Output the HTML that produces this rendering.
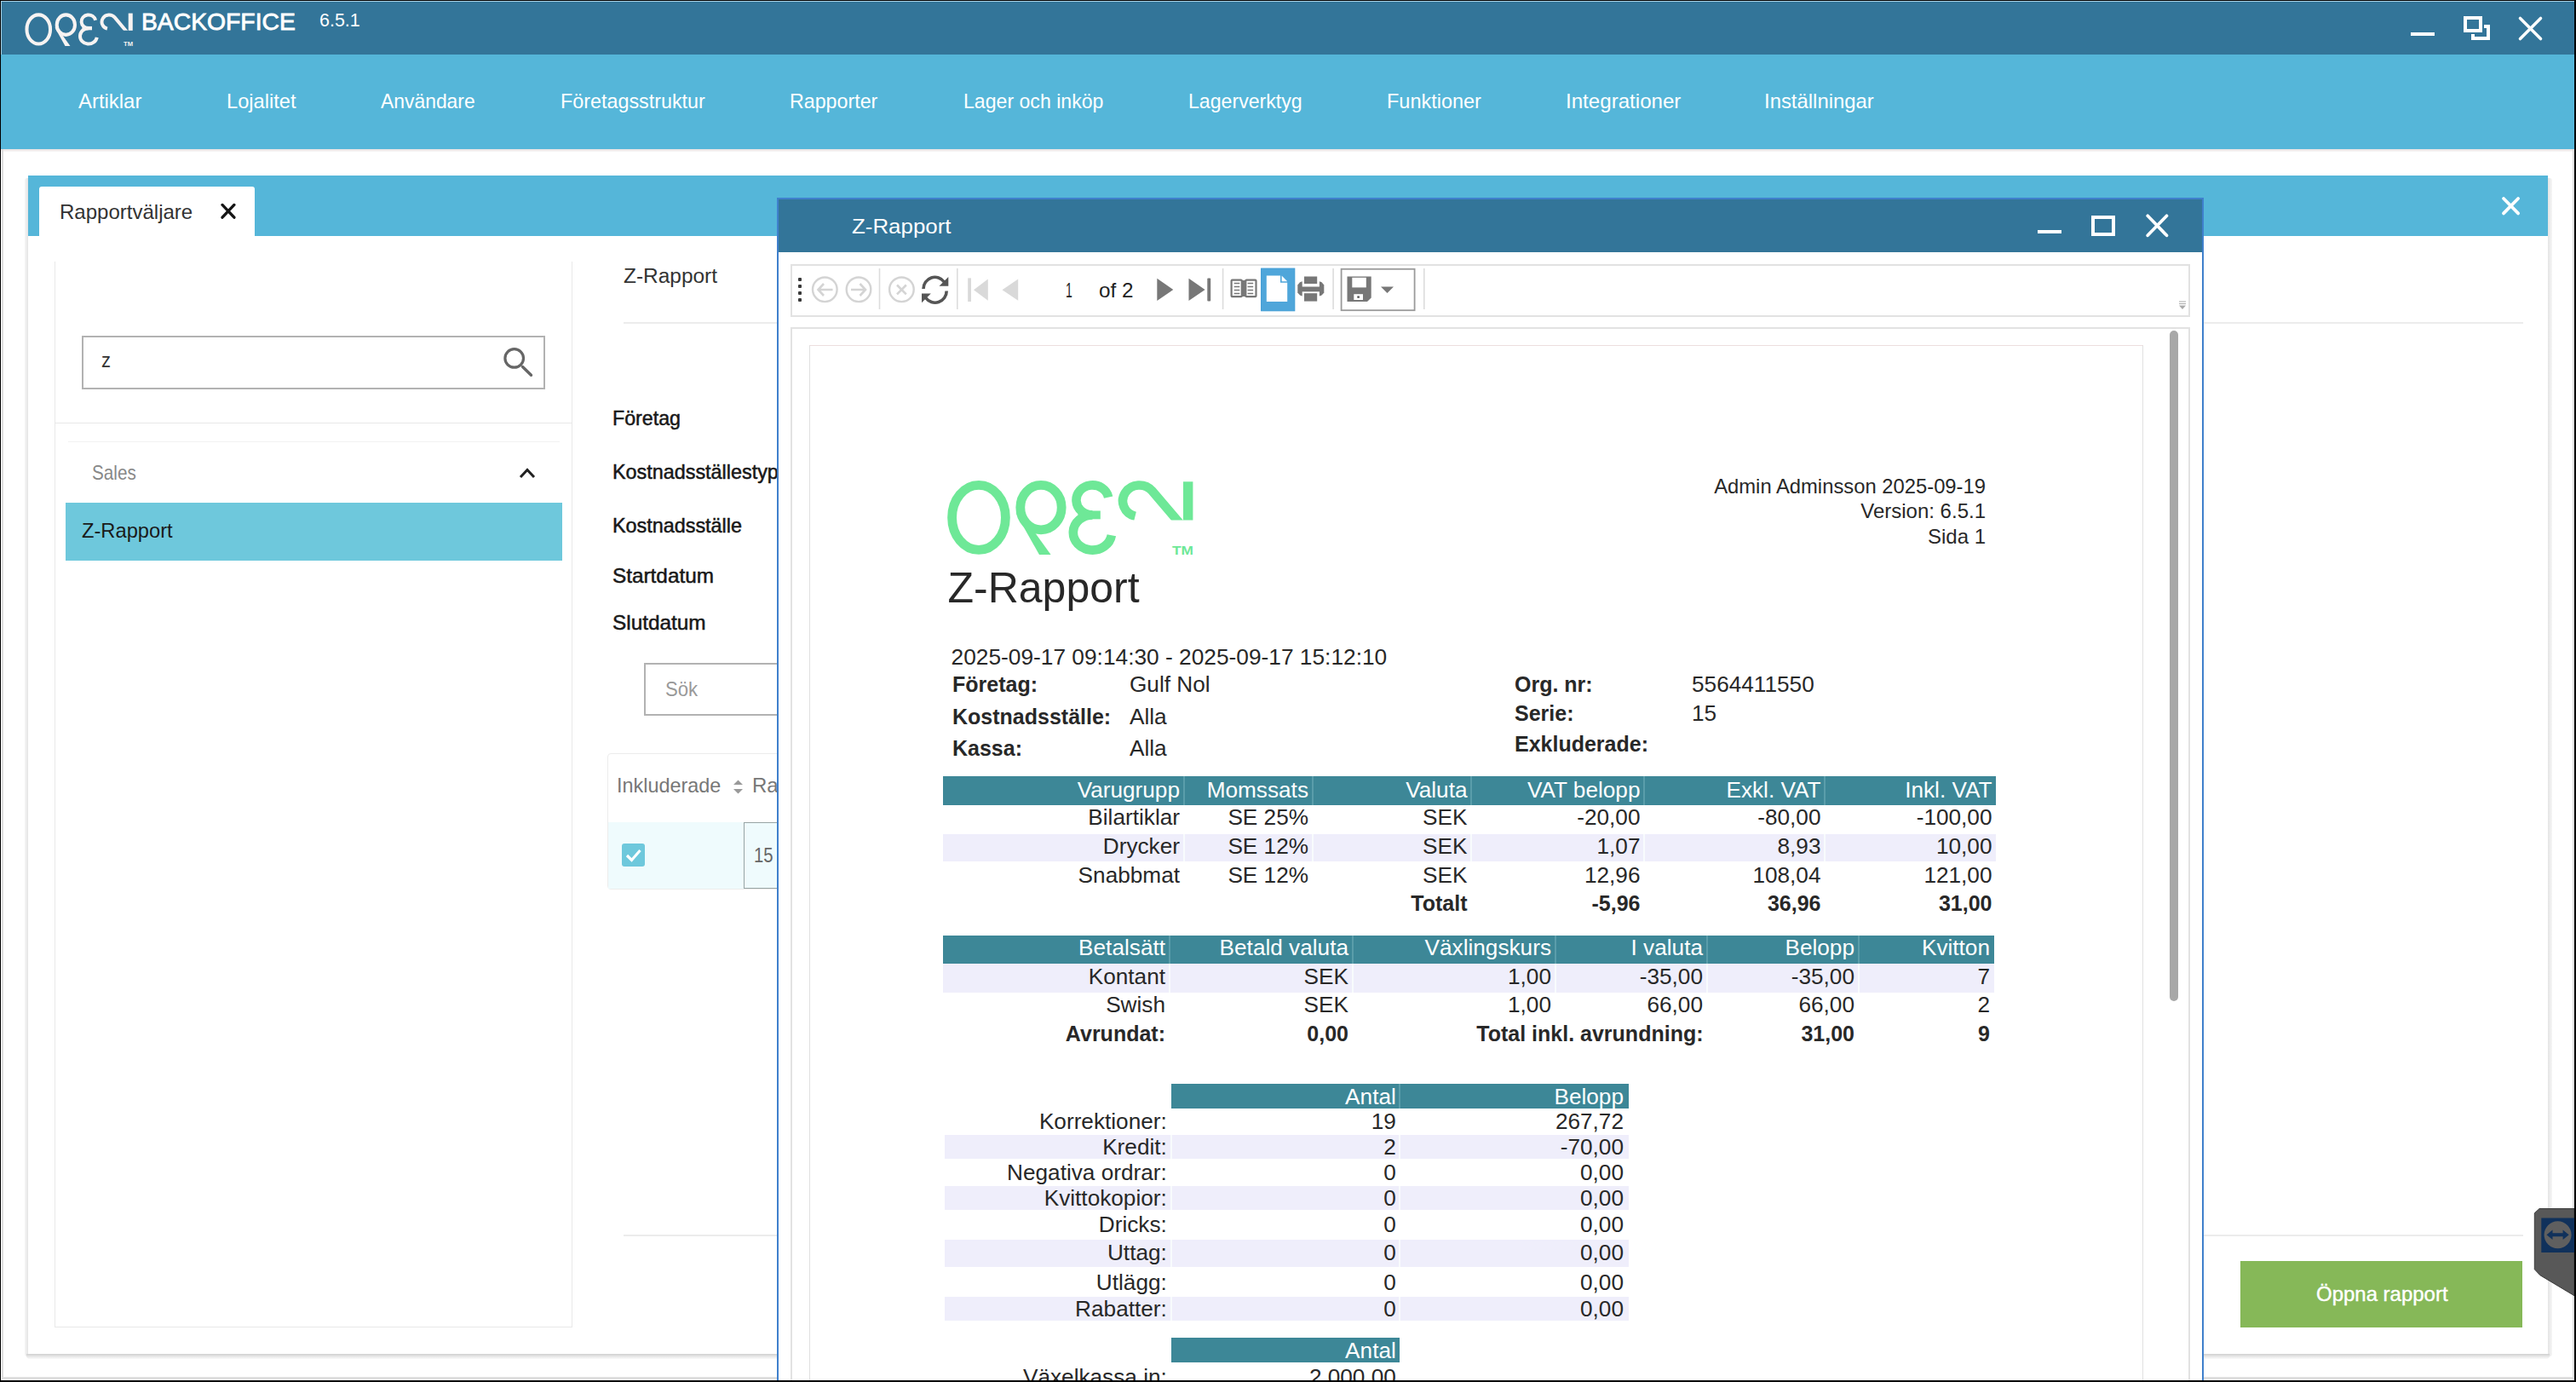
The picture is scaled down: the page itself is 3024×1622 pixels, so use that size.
<!DOCTYPE html>
<html><head><meta charset="utf-8"><title>Z-Rapport</title>
<style>
html,body{margin:0;padding:0;}
body{width:3024px;height:1622px;position:relative;overflow:hidden;background:#fff;font-family:"Liberation Sans",sans-serif;}
.t{position:absolute;white-space:nowrap;}
</style></head><body>
<div style="position:absolute;left:0px;top:0px;width:3024px;height:1622px;background:#000"></div>
<div style="position:absolute;left:1px;top:1px;width:3021px;height:1619px;background:#fff"></div>
<div style="position:absolute;left:1px;top:1px;width:3021px;height:63px;background:#337599"></div>
<div style="position:absolute;left:1px;top:1px;width:3021px;height:1px;background:#a9d3e6"></div>
<div style="position:absolute;left:1px;top:1px;width:1px;height:63px;background:#a9d3e6"></div>
<svg style="position:absolute;left:29px;top:14.5px;overflow:visible" width="127.0" height="39.0" viewBox="0 0 289 87" preserveAspectRatio="none">
<defs><clipPath id="cpNI1"><rect x="150" y="-5" width="139" height="51.5"/></clipPath></defs>
<ellipse cx="37" cy="43.4" rx="31.4" ry="38" fill="none" stroke="#f7f3f2" stroke-width="9.18"/>
<ellipse cx="110" cy="31.6" rx="24.2" ry="26.2" fill="none" stroke="#f7f3f2" stroke-width="9.18"/>
<path d="M80.3 38 L108 87 H121.6 L103.4 61.7 Z" fill="#f7f3f2"/>
<path d="M189.15 19.56 A19 17.5 0 1 0 170.5 40.4 M170.5 40.4 A22.65 20.6 0 1 0 192.86 64.29" fill="none" stroke="#f7f3f2" stroke-width="9.01"/>
<rect x="153.5" y="35.5" width="26.3" height="9.8" fill="#f7f3f2"/>
<path d="M220.55 41.87 A19.5 18.5 0 1 1 240.4 12 L277.9 56" fill="none" stroke="#f7f3f2" stroke-width="9.01" clip-path="url(#cpNI1)"/>
<rect x="277" y="1.3" width="11.4" height="45.2" fill="#f7f3f2"/>
<text x="264" y="86.5" font-size="14" font-weight="bold" font-family="Liberation Sans" fill="#f7f3f2" textLength="25" lengthAdjust="spacingAndGlyphs">TM</text>
</svg>
<div class="t" style="left:166.00px;top:11.72px;font-size:27.5px;line-height:27.5px;color:#fff;font-weight:normal;transform:scaleX(1.0289);transform-origin:0 0;-webkit-text-stroke:0.8px #fff;">BACKOFFICE</div>
<div class="t" style="left:375.30px;top:12.87px;font-size:22px;line-height:22px;color:#fff;font-weight:normal;transform:scaleX(0.9745);transform-origin:0 0;">6.5.1</div>
<div style="position:absolute;left:2830px;top:38px;width:28px;height:4px;background:#fff"></div>
<svg style="position:absolute;left:2880px;top:10px" width="60" height="50"><path d="M23 30 V35 H41 V21 H36" fill="none" stroke="#fff" stroke-width="4"/><rect x="14" y="11" width="18" height="15" fill="none" stroke="#fff" stroke-width="4"/></svg>
<svg style="position:absolute;left:2950px;top:13px" width="40" height="40"><path d="M8.5 8.5 L32.5 32.5 M32.5 8.5 L8.5 32.5" stroke="#fff" stroke-width="3.6" stroke-linecap="round"/></svg>
<div style="position:absolute;left:1px;top:64px;width:3021px;height:110.5px;background:#55b6d9"></div>
<div style="position:absolute;left:1px;top:175px;width:3021px;height:2.5px;background:linear-gradient(to bottom,#e6e0e0,#f8f6f6)"></div>
<div class="t" style="left:92.00px;top:106.98px;font-size:24px;line-height:24px;color:#fff;font-weight:normal;transform:scaleX(0.9960);transform-origin:0 0;">Artiklar</div>
<div class="t" style="left:266.30px;top:106.98px;font-size:24px;line-height:24px;color:#fff;font-weight:normal;transform:scaleX(0.9862);transform-origin:0 0;">Lojalitet</div>
<div class="t" style="left:446.80px;top:106.98px;font-size:24px;line-height:24px;color:#fff;font-weight:normal;transform:scaleX(0.9535);transform-origin:0 0;">Användare</div>
<div class="t" style="left:657.70px;top:106.98px;font-size:24px;line-height:24px;color:#fff;font-weight:normal;transform:scaleX(0.9718);transform-origin:0 0;">Företagsstruktur</div>
<div class="t" style="left:926.70px;top:106.98px;font-size:24px;line-height:24px;color:#fff;font-weight:normal;transform:scaleX(0.9678);transform-origin:0 0;">Rapporter</div>
<div class="t" style="left:1130.50px;top:106.98px;font-size:24px;line-height:24px;color:#fff;font-weight:normal;transform:scaleX(0.9624);transform-origin:0 0;">Lager och inköp</div>
<div class="t" style="left:1394.70px;top:106.98px;font-size:24px;line-height:24px;color:#fff;font-weight:normal;transform:scaleX(0.9638);transform-origin:0 0;">Lagerverktyg</div>
<div class="t" style="left:1627.80px;top:106.98px;font-size:24px;line-height:24px;color:#fff;font-weight:normal;transform:scaleX(0.9780);transform-origin:0 0;">Funktioner</div>
<div class="t" style="left:1838.00px;top:106.98px;font-size:24px;line-height:24px;color:#fff;font-weight:normal;transform:scaleX(1.0047);transform-origin:0 0;">Integrationer</div>
<div class="t" style="left:2071.20px;top:106.98px;font-size:24px;line-height:24px;color:#fff;font-weight:normal;transform:scaleX(0.9952);transform-origin:0 0;">Inställningar</div>
<div style="position:absolute;left:29px;top:209px;width:4px;height:1383px;background:linear-gradient(to right,#f6f6f6,#e4e4e4);border-radius:3px 0 0 3px"></div>
<div style="position:absolute;left:2991px;top:209px;width:4.5px;height:1383px;background:linear-gradient(to right,#e4e4e4,#f6f6f6);border-radius:0 3px 3px 0"></div>
<div style="position:absolute;left:31px;top:1589px;width:2962px;height:6px;background:linear-gradient(to bottom,#cfcfcf,#ececec 60%,#fafafa);border-radius:0 0 4px 4px"></div>
<div style="position:absolute;left:33px;top:206px;width:2958px;height:1383px;background:#fff"></div>
<div style="position:absolute;left:33px;top:206px;width:2958px;height:71px;background:#55b6d9"></div>
<div style="position:absolute;left:46px;top:219px;width:253px;height:58px;background:#fff;border-radius:3px 3px 0 0"></div>
<div class="t" style="left:69.50px;top:236.68px;font-size:24px;line-height:24px;color:#333;font-weight:normal;transform:scaleX(1.0009);transform-origin:0 0;">Rapportväljare</div>
<svg style="position:absolute;left:255px;top:235px" width="26" height="26"><path d="M6 5.4 L19.9 20.2 M19.9 5.4 L6 20.2" stroke="#151515" stroke-width="3.3" stroke-linecap="round"/></svg>
<svg style="position:absolute;left:2933px;top:227px" width="30" height="30"><path d="M6 6 L23.1 23.4 M23.1 6 L6 23.4" stroke="#fff" stroke-width="3.8" stroke-linecap="round"/></svg>
<div style="position:absolute;left:64px;top:307px;width:608px;height:1251px;border:1px solid #e8e8e8;box-sizing:border-box;border-top:none"></div>
<div style="position:absolute;left:96px;top:393.5px;width:543.5px;height:63.0px;border:2px solid #b2b2b2;box-sizing:border-box"></div>
<div class="t" style="left:119.00px;top:411.18px;font-size:24px;line-height:24px;color:#333;font-weight:normal;transform:scaleX(0.9167);transform-origin:0 0;">z</div>
<svg style="position:absolute;left:585px;top:403px" width="46" height="46"><circle cx="18.7" cy="17.4" r="10.8" fill="none" stroke="#666" stroke-width="3.2"/><path d="M28.5 27.5 L38.5 37.3" stroke="#666" stroke-width="3.4" stroke-linecap="round"/></svg>
<div style="position:absolute;left:64px;top:496px;width:608px;height:1px;background:#e8e8e8"></div>
<div style="position:absolute;left:80px;top:518px;width:577px;height:1px;background:#f2f2f2"></div>
<div class="t" style="left:108.00px;top:542.68px;font-size:24px;line-height:24px;color:#888;font-weight:normal;transform:scaleX(0.8625);transform-origin:0 0;">Sales</div>
<svg style="position:absolute;left:605px;top:545px" width="30" height="20"><path d="M6 15 L14 6.5 L22 15" fill="none" stroke="#222" stroke-width="3"/></svg>
<div style="position:absolute;left:77px;top:590px;width:583px;height:68px;background:#6ec8dc"></div>
<div class="t" style="left:96.00px;top:611.38px;font-size:24px;line-height:24px;color:#1a1a1a;font-weight:normal;transform:scaleX(0.9874);transform-origin:0 0;">Z-Rapport</div>
<div class="t" style="left:732.00px;top:312.53px;font-size:23px;line-height:23px;color:#333;font-weight:normal;transform:scaleX(1.0622);transform-origin:0 0;">Z-Rapport</div>
<div style="position:absolute;left:732px;top:378px;width:2230px;height:2px;background:#ececec"></div>
<div class="t" style="left:719.00px;top:478.68px;font-size:24px;line-height:24px;color:#1a1a1a;font-weight:normal;transform:scaleX(0.9669);transform-origin:0 0;-webkit-text-stroke:0.5px #111;">Företag</div>
<div class="t" style="left:719.00px;top:541.68px;font-size:24px;line-height:24px;color:#1a1a1a;font-weight:normal;transform:scaleX(0.9736);transform-origin:0 0;-webkit-text-stroke:0.5px #111;">Kostnadsställestyp</div>
<div class="t" style="left:719.00px;top:604.68px;font-size:24px;line-height:24px;color:#1a1a1a;font-weight:normal;transform:scaleX(0.9736);transform-origin:0 0;-webkit-text-stroke:0.5px #111;">Kostnadsställe</div>
<div class="t" style="left:719.00px;top:664.48px;font-size:24px;line-height:24px;color:#1a1a1a;font-weight:normal;transform:scaleX(1.0135);transform-origin:0 0;-webkit-text-stroke:0.5px #111;">Startdatum</div>
<div class="t" style="left:719.00px;top:719.38px;font-size:24px;line-height:24px;color:#1a1a1a;font-weight:normal;transform:scaleX(1.0143);transform-origin:0 0;-webkit-text-stroke:0.5px #111;">Slutdatum</div>
<div style="position:absolute;left:756px;top:777.5px;width:344px;height:62.5px;border:2px solid #b2b2b2;box-sizing:border-box"></div>
<div class="t" style="left:780.60px;top:796.68px;font-size:24px;line-height:24px;color:#999;font-weight:normal;transform:scaleX(0.9227);transform-origin:0 0;">Sök</div>
<div style="position:absolute;left:713px;top:884px;width:387px;height:160px;border:1px solid #ececec;border-radius:4px;box-sizing:border-box"></div>
<div class="t" style="left:724.40px;top:910.28px;font-size:24px;line-height:24px;color:#777;font-weight:normal;transform:scaleX(0.9740);transform-origin:0 0;">Inkluderade</div>
<svg style="position:absolute;left:858px;top:912px" width="18" height="24"><path d="M3 9 L8.5 3.5 L14 9 Z M3 14 L8.5 19.5 L14 14 Z" fill="#999"/></svg>
<div class="t" style="left:883px;top:910.28px;font-size:24px;line-height:24px;color:#777;font-weight:normal;">Rapport</div>
<div style="position:absolute;left:714px;top:965px;width:386px;height:78px;background:#effbfd"></div>
<div style="position:absolute;left:730px;top:990px;width:27px;height:27px;background:#6ec8dc;border-radius:3px"></div>
<svg style="position:absolute;left:730px;top:990px" width="27" height="27"><path d="M6 14 L11.5 19.5 L21.5 8" fill="none" stroke="#fff" stroke-width="3.2"/></svg>
<div style="position:absolute;left:873px;top:965px;width:227px;height:78px;border:1.5px solid #98a4a4;box-sizing:border-box"></div>
<div class="t" style="left:884.80px;top:992.18px;font-size:24px;line-height:24px;color:#666;font-weight:normal;transform:scaleX(0.8464);transform-origin:0 0;">15</div>
<div style="position:absolute;left:732px;top:1449px;width:2230px;height:2px;background:#ececec"></div>
<div style="position:absolute;left:2630px;top:1480px;width:331px;height:78px;background:#86b858"></div>
<div class="t" style="left:2718.70px;top:1507.18px;font-size:24px;line-height:24px;color:#fff;font-weight:normal;transform:scaleX(0.9987);transform-origin:0 0;-webkit-text-stroke:0.4px #fff;">Öppna rapport</div>
<div style="position:absolute;left:912px;top:231.5px;width:1675px;height:1388.5px;background:#3f80cc"></div>
<div style="position:absolute;left:914px;top:233.5px;width:1671px;height:1386.5px;background:#fff"></div>
<div style="position:absolute;left:914px;top:233.5px;width:1671px;height:62.5px;background:#337599"></div>
<div class="t" style="left:1000.00px;top:253.98px;font-size:24px;line-height:24px;color:#fff;font-weight:normal;transform:scaleX(1.0781);transform-origin:0 0;">Z-Rapport</div>
<div style="position:absolute;left:2392px;top:270px;width:28px;height:4px;background:#fff"></div>
<div style="position:absolute;left:2455px;top:253px;width:28px;height:24px;border:4px solid #fff;box-sizing:border-box"></div>
<svg style="position:absolute;left:2514px;top:247px" width="36" height="36"><path d="M7.2 6.3 L29.5 29.3 M29.5 6.3 L7.2 29.3" stroke="#fff" stroke-width="3.7" stroke-linecap="round"/></svg>
<div style="position:absolute;left:928px;top:310px;width:1643px;height:62px;border:2px solid #e2e2e2;box-sizing:border-box"></div>
<div style="position:absolute;left:928px;top:384px;width:1643px;height:1256px;border:2px solid #e2e2e2;box-sizing:border-box"></div>
<div style="position:absolute;left:950px;top:405px;width:1566px;height:1235px;border:1px solid #e0e0e0;border-top-color:#ecdede;box-sizing:border-box"></div>
<div style="position:absolute;left:2547px;top:388px;width:10px;height:787px;background:#a8a8a8;border-radius:5px"></div>
<svg style="position:absolute;left:928px;top:310px" width="760" height="62" viewBox="928 310 760 62"><g fill="#3a3a3a"><rect x="937" y="326" width="4" height="4" rx="1"/><rect x="937" y="334" width="4" height="4" rx="1"/><rect x="937" y="342" width="4" height="4" rx="1"/><rect x="937" y="350" width="4" height="4" rx="1"/></g><g fill="none" stroke="#d4d4d4" stroke-width="2.4"><circle cx="968.3" cy="339.8" r="14.3"/><circle cx="1008" cy="339.8" r="14.3"/><circle cx="1058.4" cy="339.8" r="14.3"/><path d="M961 340 H977.5 M967 333 L960.5 340 L967 347" stroke-width="2.6"/><path d="M999 340 H1015.5 M1009.5 333 L1016 340 L1009.5 347" stroke-width="2.6"/><path d="M1053 334.5 L1063.8 345.3 M1063.8 334.5 L1053 345.3" stroke-width="2.6"/></g><g fill="#dcdcdc"><rect x="1031.7" y="315" width="1.6" height="48"/><rect x="1123" y="315" width="1.6" height="48"/><rect x="1434.8" y="315" width="1.6" height="48"/><rect x="1564.3" y="315" width="1.6" height="48"/><rect x="1671" y="315" width="1.6" height="48"/></g><g fill="#555"><path d="M1084 339 A13.5 13.5 0 0 1 1108.5 331" fill="none" stroke="#555" stroke-width="3.6"/><path d="M1113.3 325 V335.8 H1102.5 Z"/><path d="M1111.2 341.5 A13.5 13.5 0 0 1 1086.7 349.5" fill="none" stroke="#555" stroke-width="3.6"/><path d="M1082 355.3 V344.5 H1092.8 Z"/></g><g fill="#d9d9d9"><rect x="1136.2" y="326.4" width="3.8" height="27.6"/><path d="M1143 340.2 L1159.8 327.5 V352.8 Z"/><path d="M1176.5 340.2 L1195.2 327.5 V352.8 Z"/></g><g fill="#777"><path d="M1358.3 326.8 L1377.3 340 L1358.3 353.1 Z"/><path d="M1395.5 326.8 L1414.6 340 L1395.5 353.1 Z"/><rect x="1417.3" y="326.4" width="3.9" height="27.1" rx="1"/></g><g fill="none" stroke="#777" stroke-width="2.2"><rect x="1445.6" y="328.6" width="12.2" height="19.6" rx="1"/><rect x="1462.3" y="328.6" width="12.2" height="19.6" rx="1"/></g><rect x="1457.8" y="329" width="4.5" height="19" fill="#777"/><g stroke="#777" stroke-width="1.6"><path d="M1448.7 332.5 H1455.3 M1448.7 336.5 H1455.3 M1448.7 340.5 H1455.3 M1448.7 344.5 H1455.3"/><path d="M1464.6 332.5 H1471.2 M1464.6 336.5 H1471.2 M1464.6 340.5 H1471.2 M1464.6 344.5 H1471.2"/></g><rect x="1480.6" y="315.1" width="39.2" height="49.7" fill="#4fa6da" stroke="#3d9ad4" stroke-width="1"/><path d="M1486.8 323.6 H1503 V331.8 H1511.2 V353.9 H1486.8 Z" fill="#fff"/><path d="M1504.6 323.6 L1511.2 330.2 H1504.6 Z" fill="#fff"/><g fill="#777"><rect x="1531" y="324.5" width="15.2" height="8.5"/><rect x="1531" y="344.2" width="15.2" height="9.4"/><rect x="1528" y="336.5" width="21.6" height="5.8"/><path d="M1528.7 330.3 L1526 331.2 L1523.3 334.5 V343.5 L1526 346.5 L1528.7 347.4 Z"/><path d="M1548.9 330.3 L1551.6 331.2 L1554.3 334.5 V343.5 L1551.6 346.5 L1548.9 347.4 Z"/></g><rect x="1574.6" y="315.8" width="86" height="48.4" fill="none" stroke="#9a9a9a" stroke-width="1.8"/><path d="M1581.5 324.4 H1609.7 V349.5 L1605 354 H1581.5 Z" fill="#777"/><rect x="1587.3" y="325.8" width="16.5" height="11.6" fill="#fff"/><rect x="1589.3" y="345.2" width="10.7" height="6.8" fill="#fff"/><rect x="1593.3" y="347.4" width="2.6" height="2.4" fill="#555"/><path d="M1621 336.5 H1636 L1628.5 344 Z" fill="#777"/></svg>
<div class="t" style="left:1251.40px;top:329.28px;font-size:24px;line-height:24px;color:#222;font-weight:normal;transform:scaleX(0.5856);transform-origin:0 0;">1</div>
<div class="t" style="left:1289.90px;top:329.28px;font-size:24px;line-height:24px;color:#222;font-weight:normal;transform:scaleX(1.0120);transform-origin:0 0;">of 2</div>
<svg style="position:absolute;left:2555px;top:350px" width="14" height="16"><path d="M3 4 H11 M3 6.5 H11" stroke="#aaa" stroke-width="1.2"/><path d="M3 8.5 H11 L7 13 Z" fill="#aaa"/></svg>
<svg style="position:absolute;left:1112px;top:564px;overflow:visible" width="289" height="87" viewBox="0 0 289 87" preserveAspectRatio="none">
<defs><clipPath id="cpNI2"><rect x="150" y="-5" width="139" height="51.5"/></clipPath></defs>
<ellipse cx="37" cy="43.4" rx="31.4" ry="38" fill="none" stroke="#6ee897" stroke-width="10.8"/>
<ellipse cx="110" cy="31.6" rx="24.2" ry="26.2" fill="none" stroke="#6ee897" stroke-width="10.8"/>
<path d="M80.3 38 L108 87 H121.6 L103.4 61.7 Z" fill="#6ee897"/>
<path d="M189.15 19.56 A19 17.5 0 1 0 170.5 40.4 M170.5 40.4 A22.65 20.6 0 1 0 192.86 64.29" fill="none" stroke="#6ee897" stroke-width="10.6"/>
<rect x="153.5" y="35.5" width="26.3" height="9.8" fill="#6ee897"/>
<path d="M220.55 41.87 A19.5 18.5 0 1 1 240.4 12 L277.9 56" fill="none" stroke="#6ee897" stroke-width="10.6" clip-path="url(#cpNI2)"/>
<rect x="277" y="1.3" width="11.4" height="45.2" fill="#6ee897"/>
<text x="264" y="86.5" font-size="14" font-weight="bold" font-family="Liberation Sans" fill="#6ee897" textLength="25" lengthAdjust="spacingAndGlyphs">TM</text>
</svg>
<div class="t" style="left:1112.5px;top:664.66px;font-size:50px;line-height:50px;color:#282828;font-weight:normal;">Z-Rapport</div>
<div class="t" style="left:1116.5px;top:758.13px;font-size:26.3px;line-height:26.3px;color:#282828;font-weight:normal;">2025-09-17 09:14:30 - 2025-09-17 15:12:10</div>
<div class="t" style="right:693.0px;top:559.35px;font-size:23.8px;line-height:23.8px;color:#282828;font-weight:normal;">Admin Adminsson 2025-09-19</div>
<div class="t" style="right:693.0px;top:588.28px;font-size:24px;line-height:24px;color:#282828;font-weight:normal;">Version: 6.5.1</div>
<div class="t" style="right:693.0px;top:618.48px;font-size:24px;line-height:24px;color:#282828;font-weight:normal;">Sida 1</div>
<div class="t" style="left:1118px;top:790.83px;font-size:25px;line-height:25px;color:#282828;font-weight:bold;">Företag:</div>
<div class="t" style="left:1326px;top:789.82px;font-size:26.2px;line-height:26.2px;color:#282828;font-weight:normal;">Gulf Nol</div>
<div class="t" style="left:1118px;top:828.83px;font-size:25px;line-height:25px;color:#282828;font-weight:bold;">Kostnadsställe:</div>
<div class="t" style="left:1326px;top:827.82px;font-size:26.2px;line-height:26.2px;color:#282828;font-weight:normal;">Alla</div>
<div class="t" style="left:1118px;top:865.83px;font-size:25px;line-height:25px;color:#282828;font-weight:bold;">Kassa:</div>
<div class="t" style="left:1326px;top:864.82px;font-size:26.2px;line-height:26.2px;color:#282828;font-weight:normal;">Alla</div>
<div class="t" style="left:1778px;top:790.83px;font-size:25px;line-height:25px;color:#282828;font-weight:bold;">Org. nr:</div>
<div class="t" style="left:1986px;top:789.82px;font-size:26.2px;line-height:26.2px;color:#282828;font-weight:normal;">5564411550</div>
<div class="t" style="left:1778px;top:825.23px;font-size:25px;line-height:25px;color:#282828;font-weight:bold;">Serie:</div>
<div class="t" style="left:1986px;top:824.22px;font-size:26.2px;line-height:26.2px;color:#282828;font-weight:normal;">15</div>
<div class="t" style="left:1778px;top:861.33px;font-size:25px;line-height:25px;color:#282828;font-weight:bold;">Exkluderade:</div>
<div style="position:absolute;left:1107px;top:911px;width:1236px;height:34px;background:#3d8797"></div>
<div style="position:absolute;left:1388.5px;top:911px;width:2.0px;height:34px;background:#5a9daa"></div>
<div style="position:absolute;left:1539.5px;top:911px;width:2.0px;height:34px;background:#5a9daa"></div>
<div style="position:absolute;left:1726px;top:911px;width:2px;height:34px;background:#5a9daa"></div>
<div style="position:absolute;left:1929px;top:911px;width:2px;height:34px;background:#5a9daa"></div>
<div style="position:absolute;left:2141px;top:911px;width:2px;height:34px;background:#5a9daa"></div>
<div class="t" style="right:1639.0px;top:914.42px;font-size:26.2px;line-height:26.2px;color:#fff;font-weight:normal;">Varugrupp</div>
<div class="t" style="right:1488.0px;top:914.42px;font-size:26.2px;line-height:26.2px;color:#fff;font-weight:normal;">Momssats</div>
<div class="t" style="right:1301.5px;top:914.42px;font-size:26.2px;line-height:26.2px;color:#fff;font-weight:normal;">Valuta</div>
<div class="t" style="right:1098.5px;top:914.42px;font-size:26.2px;line-height:26.2px;color:#fff;font-weight:normal;">VAT belopp</div>
<div class="t" style="right:886.5px;top:914.42px;font-size:26.2px;line-height:26.2px;color:#fff;font-weight:normal;">Exkl. VAT</div>
<div class="t" style="right:685.5px;top:914.42px;font-size:26.2px;line-height:26.2px;color:#fff;font-weight:normal;">Inkl. VAT</div>
<div class="t" style="right:1639.0px;top:946.42px;font-size:26.2px;line-height:26.2px;color:#282828;font-weight:normal;">Bilartiklar</div>
<div class="t" style="right:1488.0px;top:946.42px;font-size:26.2px;line-height:26.2px;color:#282828;font-weight:normal;">SE 25%</div>
<div class="t" style="right:1301.5px;top:946.42px;font-size:26.2px;line-height:26.2px;color:#282828;font-weight:normal;">SEK</div>
<div class="t" style="right:1098.5px;top:946.42px;font-size:26.2px;line-height:26.2px;color:#282828;font-weight:normal;">-20,00</div>
<div class="t" style="right:886.5px;top:946.42px;font-size:26.2px;line-height:26.2px;color:#282828;font-weight:normal;">-80,00</div>
<div class="t" style="right:685.5px;top:946.42px;font-size:26.2px;line-height:26.2px;color:#282828;font-weight:normal;">-100,00</div>
<div style="position:absolute;left:1107px;top:979px;width:1236px;height:32px;background:#efeefb"></div>
<div style="position:absolute;left:1388.5px;top:979px;width:2.0px;height:32px;background:#f8fbfd"></div>
<div style="position:absolute;left:1539.5px;top:979px;width:2.0px;height:32px;background:#f8fbfd"></div>
<div style="position:absolute;left:1726px;top:979px;width:2px;height:32px;background:#f8fbfd"></div>
<div style="position:absolute;left:1929px;top:979px;width:2px;height:32px;background:#f8fbfd"></div>
<div style="position:absolute;left:2141px;top:979px;width:2px;height:32px;background:#f8fbfd"></div>
<div class="t" style="right:1639.0px;top:980.02px;font-size:26.2px;line-height:26.2px;color:#282828;font-weight:normal;">Drycker</div>
<div class="t" style="right:1488.0px;top:980.02px;font-size:26.2px;line-height:26.2px;color:#282828;font-weight:normal;">SE 12%</div>
<div class="t" style="right:1301.5px;top:980.02px;font-size:26.2px;line-height:26.2px;color:#282828;font-weight:normal;">SEK</div>
<div class="t" style="right:1098.5px;top:980.02px;font-size:26.2px;line-height:26.2px;color:#282828;font-weight:normal;">1,07</div>
<div class="t" style="right:886.5px;top:980.02px;font-size:26.2px;line-height:26.2px;color:#282828;font-weight:normal;">8,93</div>
<div class="t" style="right:685.5px;top:980.02px;font-size:26.2px;line-height:26.2px;color:#282828;font-weight:normal;">10,00</div>
<div class="t" style="right:1639.0px;top:1014.12px;font-size:26.2px;line-height:26.2px;color:#282828;font-weight:normal;">Snabbmat</div>
<div class="t" style="right:1488.0px;top:1014.12px;font-size:26.2px;line-height:26.2px;color:#282828;font-weight:normal;">SE 12%</div>
<div class="t" style="right:1301.5px;top:1014.12px;font-size:26.2px;line-height:26.2px;color:#282828;font-weight:normal;">SEK</div>
<div class="t" style="right:1098.5px;top:1014.12px;font-size:26.2px;line-height:26.2px;color:#282828;font-weight:normal;">12,96</div>
<div class="t" style="right:886.5px;top:1014.12px;font-size:26.2px;line-height:26.2px;color:#282828;font-weight:normal;">108,04</div>
<div class="t" style="right:685.5px;top:1014.12px;font-size:26.2px;line-height:26.2px;color:#282828;font-weight:normal;">121,00</div>
<div class="t" style="right:1301.5px;top:1048.43px;font-size:25px;line-height:25px;color:#282828;font-weight:bold;">Totalt</div>
<div class="t" style="right:1098.5px;top:1048.43px;font-size:25px;line-height:25px;color:#282828;font-weight:bold;">-5,96</div>
<div class="t" style="right:886.5px;top:1048.43px;font-size:25px;line-height:25px;color:#282828;font-weight:bold;">36,96</div>
<div class="t" style="right:685.5px;top:1048.43px;font-size:25px;line-height:25px;color:#282828;font-weight:bold;">31,00</div>
<div style="position:absolute;left:1107px;top:1098px;width:1233.5px;height:33px;background:#3d8797"></div>
<div style="position:absolute;left:1371.5px;top:1098px;width:2.0px;height:33px;background:#5a9daa"></div>
<div style="position:absolute;left:1586.5px;top:1098px;width:2.0px;height:33px;background:#5a9daa"></div>
<div style="position:absolute;left:1824.5px;top:1098px;width:2.0px;height:33px;background:#5a9daa"></div>
<div style="position:absolute;left:2002.5px;top:1098px;width:2.0px;height:33px;background:#5a9daa"></div>
<div style="position:absolute;left:2180.5px;top:1098px;width:2.0px;height:33px;background:#5a9daa"></div>
<div class="t" style="right:1656.0px;top:1099.42px;font-size:26.2px;line-height:26.2px;color:#fff;font-weight:normal;">Betalsätt</div>
<div class="t" style="right:1441.0px;top:1099.42px;font-size:26.2px;line-height:26.2px;color:#fff;font-weight:normal;">Betald valuta</div>
<div class="t" style="right:1203.0px;top:1099.42px;font-size:26.2px;line-height:26.2px;color:#fff;font-weight:normal;">Växlingskurs</div>
<div class="t" style="right:1025.0px;top:1099.42px;font-size:26.2px;line-height:26.2px;color:#fff;font-weight:normal;">I valuta</div>
<div class="t" style="right:847.0px;top:1099.42px;font-size:26.2px;line-height:26.2px;color:#fff;font-weight:normal;">Belopp</div>
<div class="t" style="right:688.0px;top:1099.42px;font-size:26.2px;line-height:26.2px;color:#fff;font-weight:normal;">Kvitton</div>
<div style="position:absolute;left:1107px;top:1131px;width:1233.5px;height:33.5px;background:#efeefb"></div>
<div style="position:absolute;left:1371.5px;top:1131px;width:2.0px;height:33.5px;background:#f8fbfd"></div>
<div style="position:absolute;left:1586.5px;top:1131px;width:2.0px;height:33.5px;background:#f8fbfd"></div>
<div style="position:absolute;left:1824.5px;top:1131px;width:2.0px;height:33.5px;background:#f8fbfd"></div>
<div style="position:absolute;left:2002.5px;top:1131px;width:2.0px;height:33.5px;background:#f8fbfd"></div>
<div style="position:absolute;left:2180.5px;top:1131px;width:2.0px;height:33.5px;background:#f8fbfd"></div>
<div class="t" style="right:1656.0px;top:1133.02px;font-size:26.2px;line-height:26.2px;color:#282828;font-weight:normal;">Kontant</div>
<div class="t" style="right:1441.0px;top:1133.02px;font-size:26.2px;line-height:26.2px;color:#282828;font-weight:normal;">SEK</div>
<div class="t" style="right:1203.0px;top:1133.02px;font-size:26.2px;line-height:26.2px;color:#282828;font-weight:normal;">1,00</div>
<div class="t" style="right:1025.0px;top:1133.02px;font-size:26.2px;line-height:26.2px;color:#282828;font-weight:normal;">-35,00</div>
<div class="t" style="right:847.0px;top:1133.02px;font-size:26.2px;line-height:26.2px;color:#282828;font-weight:normal;">-35,00</div>
<div class="t" style="right:688.0px;top:1133.02px;font-size:26.2px;line-height:26.2px;color:#282828;font-weight:normal;">7</div>
<div class="t" style="right:1656.0px;top:1166.32px;font-size:26.2px;line-height:26.2px;color:#282828;font-weight:normal;">Swish</div>
<div class="t" style="right:1441.0px;top:1166.32px;font-size:26.2px;line-height:26.2px;color:#282828;font-weight:normal;">SEK</div>
<div class="t" style="right:1203.0px;top:1166.32px;font-size:26.2px;line-height:26.2px;color:#282828;font-weight:normal;">1,00</div>
<div class="t" style="right:1025.0px;top:1166.32px;font-size:26.2px;line-height:26.2px;color:#282828;font-weight:normal;">66,00</div>
<div class="t" style="right:847.0px;top:1166.32px;font-size:26.2px;line-height:26.2px;color:#282828;font-weight:normal;">66,00</div>
<div class="t" style="right:688.0px;top:1166.32px;font-size:26.2px;line-height:26.2px;color:#282828;font-weight:normal;">2</div>
<div class="t" style="right:1656.0px;top:1201.43px;font-size:25px;line-height:25px;color:#282828;font-weight:bold;">Avrundat:</div>
<div class="t" style="right:1441.0px;top:1201.43px;font-size:25px;line-height:25px;color:#282828;font-weight:bold;">0,00</div>
<div class="t" style="right:847.0px;top:1201.43px;font-size:25px;line-height:25px;color:#282828;font-weight:bold;">31,00</div>
<div class="t" style="right:688.0px;top:1201.43px;font-size:25px;line-height:25px;color:#282828;font-weight:bold;">9</div>
<div class="t" style="right:1024.5px;top:1201.43px;font-size:25px;line-height:25px;color:#282828;font-weight:bold;">Total inkl. avrundning:</div>
<div style="position:absolute;left:1375px;top:1272px;width:537px;height:29px;background:#3d8797"></div>
<div style="position:absolute;left:1642px;top:1272px;width:2px;height:29px;background:#5a9daa"></div>
<div class="t" style="right:1385.2px;top:1273.82px;font-size:26.2px;line-height:26.2px;color:#fff;font-weight:normal;">Antal</div>
<div class="t" style="right:1118.0px;top:1273.82px;font-size:26.2px;line-height:26.2px;color:#fff;font-weight:normal;">Belopp</div>
<div class="t" style="right:1654.2px;top:1303.02px;font-size:26.2px;line-height:26.2px;color:#282828;font-weight:normal;">Korrektioner:</div>
<div class="t" style="right:1385.2px;top:1303.02px;font-size:26.2px;line-height:26.2px;color:#282828;font-weight:normal;">19</div>
<div class="t" style="right:1118.0px;top:1303.02px;font-size:26.2px;line-height:26.2px;color:#282828;font-weight:normal;">267,72</div>
<div style="position:absolute;left:1109px;top:1332px;width:803px;height:28px;background:#efeefb"></div>
<div style="position:absolute;left:1374px;top:1332px;width:2px;height:28px;background:#f8fbfd"></div>
<div style="position:absolute;left:1642px;top:1332px;width:2px;height:28px;background:#f8fbfd"></div>
<div class="t" style="right:1654.2px;top:1332.82px;font-size:26.2px;line-height:26.2px;color:#282828;font-weight:normal;">Kredit:</div>
<div class="t" style="right:1385.2px;top:1332.82px;font-size:26.2px;line-height:26.2px;color:#282828;font-weight:normal;">2</div>
<div class="t" style="right:1118.0px;top:1332.82px;font-size:26.2px;line-height:26.2px;color:#282828;font-weight:normal;">-70,00</div>
<div class="t" style="right:1654.2px;top:1363.12px;font-size:26.2px;line-height:26.2px;color:#282828;font-weight:normal;">Negativa ordrar:</div>
<div class="t" style="right:1385.2px;top:1363.12px;font-size:26.2px;line-height:26.2px;color:#282828;font-weight:normal;">0</div>
<div class="t" style="right:1118.0px;top:1363.12px;font-size:26.2px;line-height:26.2px;color:#282828;font-weight:normal;">0,00</div>
<div style="position:absolute;left:1109px;top:1392px;width:803px;height:28px;background:#efeefb"></div>
<div style="position:absolute;left:1374px;top:1392px;width:2px;height:28px;background:#f8fbfd"></div>
<div style="position:absolute;left:1642px;top:1392px;width:2px;height:28px;background:#f8fbfd"></div>
<div class="t" style="right:1654.2px;top:1392.82px;font-size:26.2px;line-height:26.2px;color:#282828;font-weight:normal;">Kvittokopior:</div>
<div class="t" style="right:1385.2px;top:1392.82px;font-size:26.2px;line-height:26.2px;color:#282828;font-weight:normal;">0</div>
<div class="t" style="right:1118.0px;top:1392.82px;font-size:26.2px;line-height:26.2px;color:#282828;font-weight:normal;">0,00</div>
<div class="t" style="right:1654.2px;top:1424.12px;font-size:26.2px;line-height:26.2px;color:#282828;font-weight:normal;">Dricks:</div>
<div class="t" style="right:1385.2px;top:1424.12px;font-size:26.2px;line-height:26.2px;color:#282828;font-weight:normal;">0</div>
<div class="t" style="right:1118.0px;top:1424.12px;font-size:26.2px;line-height:26.2px;color:#282828;font-weight:normal;">0,00</div>
<div style="position:absolute;left:1109px;top:1455px;width:803px;height:32px;background:#efeefb"></div>
<div style="position:absolute;left:1374px;top:1455px;width:2px;height:32px;background:#f8fbfd"></div>
<div style="position:absolute;left:1642px;top:1455px;width:2px;height:32px;background:#f8fbfd"></div>
<div class="t" style="right:1654.2px;top:1457.12px;font-size:26.2px;line-height:26.2px;color:#282828;font-weight:normal;">Uttag:</div>
<div class="t" style="right:1385.2px;top:1457.12px;font-size:26.2px;line-height:26.2px;color:#282828;font-weight:normal;">0</div>
<div class="t" style="right:1118.0px;top:1457.12px;font-size:26.2px;line-height:26.2px;color:#282828;font-weight:normal;">0,00</div>
<div class="t" style="right:1654.2px;top:1491.82px;font-size:26.2px;line-height:26.2px;color:#282828;font-weight:normal;">Utlägg:</div>
<div class="t" style="right:1385.2px;top:1491.82px;font-size:26.2px;line-height:26.2px;color:#282828;font-weight:normal;">0</div>
<div class="t" style="right:1118.0px;top:1491.82px;font-size:26.2px;line-height:26.2px;color:#282828;font-weight:normal;">0,00</div>
<div style="position:absolute;left:1109px;top:1522px;width:803px;height:28px;background:#efeefb"></div>
<div style="position:absolute;left:1374px;top:1522px;width:2px;height:28px;background:#f8fbfd"></div>
<div style="position:absolute;left:1642px;top:1522px;width:2px;height:28px;background:#f8fbfd"></div>
<div class="t" style="right:1654.2px;top:1523.22px;font-size:26.2px;line-height:26.2px;color:#282828;font-weight:normal;">Rabatter:</div>
<div class="t" style="right:1385.2px;top:1523.22px;font-size:26.2px;line-height:26.2px;color:#282828;font-weight:normal;">0</div>
<div class="t" style="right:1118.0px;top:1523.22px;font-size:26.2px;line-height:26.2px;color:#282828;font-weight:normal;">0,00</div>
<div style="position:absolute;left:1375px;top:1569.5px;width:268px;height:29.5px;background:#3d8797"></div>
<div class="t" style="right:1385.2px;top:1571.82px;font-size:26.2px;line-height:26.2px;color:#fff;font-weight:normal;">Antal</div>
<div class="t" style="right:1654.2px;top:1602.82px;font-size:26.2px;line-height:26.2px;color:#282828;font-weight:normal;">Växelkassa in:</div>
<div class="t" style="right:1385.2px;top:1602.82px;font-size:26.2px;line-height:26.2px;color:#282828;font-weight:normal;">2 000,00</div>
<div style="position:absolute;left:2px;top:175px;width:2px;height:1444px;background:#dedede"></div>
<div style="position:absolute;left:3020px;top:175px;width:2px;height:1444px;background:#dedede"></div>
<div style="position:absolute;left:2px;top:1616px;width:910px;height:3px;background:#e0e0e0"></div>
<div style="position:absolute;left:2587px;top:1616px;width:435px;height:3px;background:#e0e0e0"></div>
<svg style="position:absolute;left:2970px;top:1410px" width="54" height="120"><path d="M5.3 13.8 L11 8.6 H52 V110.7 L11.9 86.7 L5.3 79.7 Z" fill="#585858" stroke="#3a3a3a" stroke-width="1"/><rect x="13.3" y="19.5" width="39" height="40.5" fill="#10315b"/><circle cx="32.6" cy="39.2" r="16" fill="#5f5f5f"/><path d="M19.5 39.2 L26.5 33.5 V37.2 H38.6 V33.5 L45.7 39.2 L38.6 44.9 V41.2 H26.5 V44.9 Z" fill="#10315b"/></svg>
<div style="position:absolute;left:0px;top:1620px;width:3024px;height:2px;background:#000"></div>
<div style="position:absolute;left:3022px;top:0px;width:2px;height:1622px;background:#000"></div>
</body></html>
